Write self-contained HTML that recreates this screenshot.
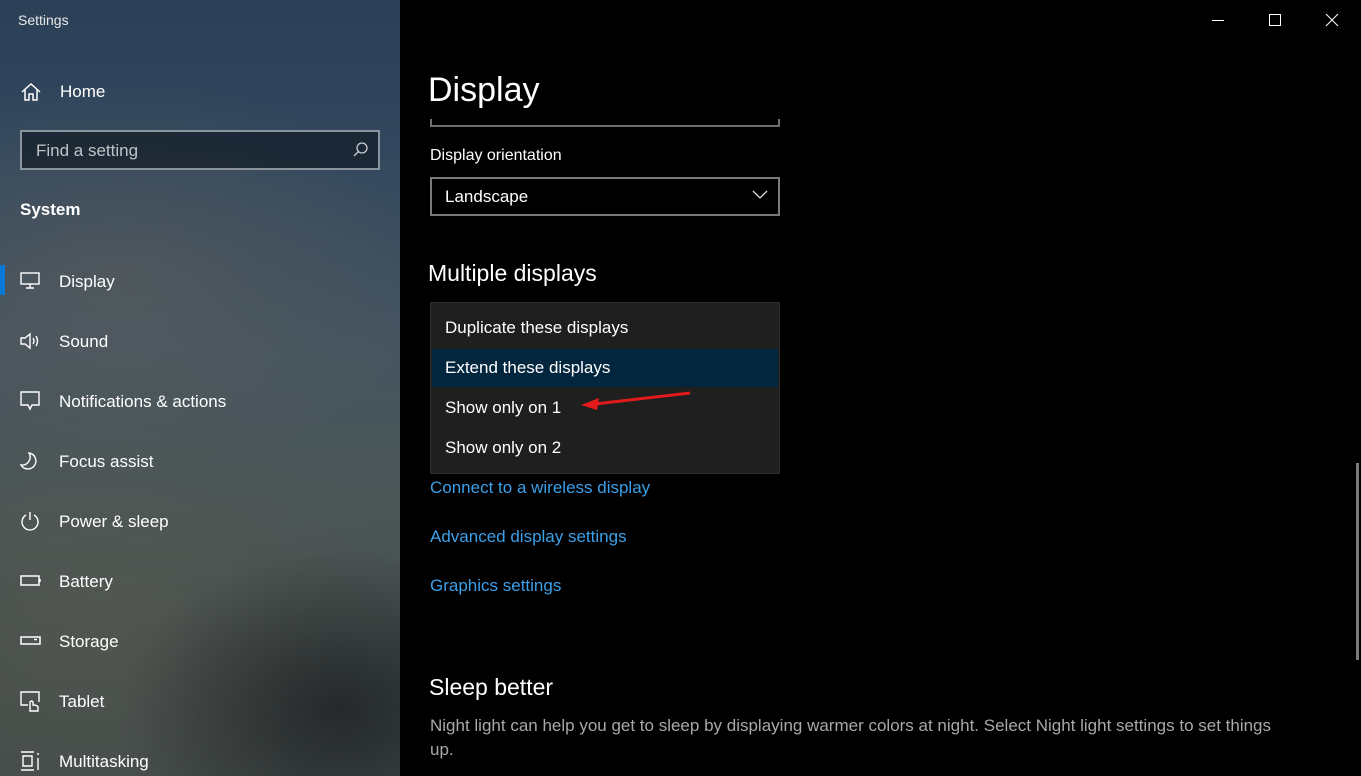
<!DOCTYPE html>
<html><head><meta charset="utf-8"><style>
*{margin:0;padding:0;box-sizing:border-box}
body{width:1361px;height:776px;overflow:hidden;background:#000;font-family:"Liberation Sans",sans-serif;color:#fff;position:relative}
#side{position:absolute;left:0;top:0;width:400px;height:776px;
background:
radial-gradient(ellipse 220px 160px at 340px 710px,rgba(30,34,36,.85),rgba(30,34,36,0)),
radial-gradient(ellipse 300px 200px at 120px 280px,rgba(95,95,90,.5),rgba(95,95,90,0)),
radial-gradient(ellipse 300px 220px at 100px 620px,rgba(90,90,80,.5),rgba(90,90,80,0)),
linear-gradient(180deg,#2b4057 0%,#33485e 20%,#465560 45%,#4b5656 65%,#464f4d 85%,#444c4a 100%);}
.t{position:absolute;white-space:nowrap}
.nav{position:absolute;left:59px;font-size:17px;color:#fff}
.ic{position:absolute;left:20px}
a{color:#3c9fe8;text-decoration:none}
</style></head><body>
<div id="side">
<div class="t" style="left:18px;top:12px;font-size:14px;color:#e8e8e8">Settings</div>
<svg class="ic" style="top:81px" width="22" height="22" viewBox="0 0 22 22" fill="none" stroke="#fff" stroke-width="1.5"><path d="M2 11 L11 3 L20 11 M5 8.5 V19 H9 V13 H13 V19 H17 V8.5"/></svg>
<div class="nav" style="top:82px;left:60px">Home</div>
<div style="position:absolute;left:20px;top:130px;width:360px;height:40px;border:2px solid #8a949c;background:rgba(20,30,40,.75)"></div>
<div class="t" style="left:36px;top:141px;font-size:17px;color:#c0c4c8">Find a setting</div>
<svg style="position:absolute;left:352px;top:141px" width="17" height="17" viewBox="0 0 17 17" fill="none" stroke="#c8ccd0" stroke-width="1.3"><circle cx="10" cy="7" r="5"/><path d="M6.5 10.5 L2 15"/></svg>
<div class="t" style="left:20px;top:200px;font-size:17px;font-weight:bold">System</div>
<div style="position:absolute;left:0;top:265px;width:5px;height:30px;background:#0a78d7"></div>
<svg class="ic" style="top:272px" width="20" height="18" viewBox="0 0 20 18" fill="none" stroke="#fff" stroke-width="1.4"><rect x="1" y="1" width="18" height="11"/><path d="M10 12 V16 M6 16 H14"/></svg>
<div class="nav" style="top:272px">Display</div>
<svg class="ic" style="top:332px" width="22" height="18" viewBox="0 0 22 18" fill="none" stroke="#fff" stroke-width="1.4"><path d="M1 6 H5 L10 2 V16 L5 12 H1 Z M13 6 Q15 9 13 12 M16 4 Q19 9 16 14"/></svg>
<div class="nav" style="top:332px">Sound</div>
<svg class="ic" style="top:391px" width="20" height="20" viewBox="0 0 20 20" fill="none" stroke="#fff" stroke-width="1.4"><path d="M1 1 H19 V14 H12 L10 18 L8 14 H1 Z"/></svg>
<div class="nav" style="top:392px">Notifications &amp; actions</div>
<svg class="ic" style="top:451px" width="20" height="20" viewBox="0 0 20 20" fill="none" stroke="#fff" stroke-width="1.4"><path d="M9 2 A8 8 0 1 1 1 14 A8 8 0 0 0 9 2 Z"/></svg>
<div class="nav" style="top:452px">Focus assist</div>
<svg class="ic" style="top:511px" width="20" height="20" viewBox="0 0 20 20" fill="none" stroke="#fff" stroke-width="1.4"><path d="M10 1 V9 M6 4 A8 8 0 1 0 14 4"/></svg>
<div class="nav" style="top:512px">Power &amp; sleep</div>
<svg class="ic" style="top:575px" width="22" height="12" viewBox="0 0 22 12" fill="none" stroke="#fff" stroke-width="1.5"><rect x="1" y="1" width="18" height="9"/><path d="M20 4 V7"/></svg>
<div class="nav" style="top:572px">Battery</div>
<svg class="ic" style="top:636px" width="22" height="10" viewBox="0 0 22 10" fill="none" stroke="#fff" stroke-width="1.5"><rect x="1" y="1" width="19" height="7"/><path d="M14 3.5 H17"/></svg>
<div class="nav" style="top:632px">Storage</div>
<svg class="ic" style="top:691px" width="22" height="22" viewBox="0 0 22 22" fill="none" stroke="#fff" stroke-width="1.4"><path d="M8 14 H1 V1 H19 V11 M10 20 V11 Q12 9 13 11 V14 Q17 14 18 16 V20 Z"/></svg>
<div class="nav" style="top:692px">Tablet</div>
<svg class="ic" style="top:751px" width="22" height="22" viewBox="0 0 22 22" fill="none" stroke="#fff" stroke-width="1.4"><path d="M1 1 H14 M1 19 H14 M3 5 H12 V15 H3 Z M18 2 V4 M18 7 V19"/></svg>
<div class="nav" style="top:752px">Multitasking</div>
</div>

<svg style="position:absolute;left:1212px;top:13px" width="130" height="16" fill="none" stroke="#fff" stroke-width="1"><path d="M0 7.5 H12"/><rect x="57.5" y="1.5" width="11" height="11"/><path d="M114 1 L126 13 M126 1 L114 13"/></svg>

<div class="t" style="left:428px;top:71px;font-size:34px">Display</div>
<div style="position:absolute;left:430px;top:119px;width:350px;height:8px;border:2px solid #6e6e6e;border-top:none"></div>
<div class="t" style="left:430px;top:147px;font-size:16px">Display orientation</div>
<div style="position:absolute;left:430px;top:177px;width:350px;height:39px;border:2px solid #7a7a7a"></div>
<div class="t" style="left:445px;top:187px;font-size:17px">Landscape</div>
<svg style="position:absolute;left:752px;top:190px" width="16" height="10" fill="none" stroke="#ddd" stroke-width="1.3"><path d="M1 1 L8 8 L15 1"/></svg>
<div class="t" style="left:428px;top:260px;font-size:23px">Multiple displays</div>
<div style="position:absolute;left:430px;top:302px;width:350px;height:172px;background:#1f1f1f;border:1px solid #2e2e2e"></div>
<div style="position:absolute;left:432px;top:349px;width:346px;height:38px;background:#03263f"></div>
<div class="t" style="left:445px;top:318px;font-size:17px">Duplicate these displays</div>
<div class="t" style="left:445px;top:358px;font-size:17px">Extend these displays</div>
<div class="t" style="left:445px;top:398px;font-size:17px">Show only on 1</div>
<div class="t" style="left:445px;top:438px;font-size:17px">Show only on 2</div>
<svg style="position:absolute;left:575px;top:390px" width="120" height="24"><path d="M115 3 L20 14" stroke="#e21a1a" stroke-width="3" fill="none"/><path d="M6 15 L24 8 L22 20 Z" fill="#e21a1a"/></svg>
<div class="t" style="left:430px;top:478px;font-size:17px"><a>Connect to a wireless display</a></div>
<div class="t" style="left:430px;top:527px;font-size:17px"><a>Advanced display settings</a></div>
<div class="t" style="left:430px;top:576px;font-size:17px"><a>Graphics settings</a></div>
<div class="t" style="left:429px;top:674px;font-size:23px">Sleep better</div>
<div style="position:absolute;left:430px;top:714px;width:860px;font-size:17px;line-height:24px;color:#a8a8a8">Night light can help you get to sleep by displaying warmer colors at night. Select Night light settings to set things up.</div>
<div style="position:absolute;left:1356px;top:463px;width:3px;height:197px;background:#7a7a7a"></div>
</body></html>
